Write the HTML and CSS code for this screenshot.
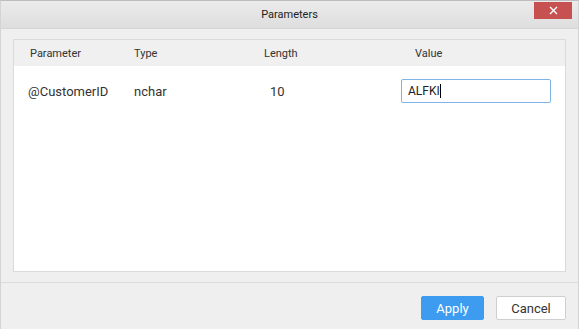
FILE: index.html
```html
<!DOCTYPE html>
<html lang="en">
<head>
    <meta charset="UTF-8">
    <title>Parameters</title>
    <link rel="stylesheet" href="styles.css">
</head>
<body>
    <div class="dialog">
        <div class="title-bar">
            <div class="title">Parameters</div>
            <div class="close-btn">
                <svg width="9" height="9" viewBox="0 0 9 9"><path d="M1 1L8 8M8 1L1 8" stroke="#fff" stroke-width="1.4"/></svg>
            </div>
        </div>
        <div class="content">
            <div class="grid">
                <div class="grid-head">
                    <div class="col col-name">Parameter</div>
                    <div class="col col-type">Type</div>
                    <div class="col col-length">Length</div>
                    <div class="col col-value">Value</div>
                </div>
                <div class="grid-row">
                    <div class="col col-name">@CustomerID</div>
                    <div class="col col-type">nchar</div>
                    <div class="col col-length">10</div>
                    <div class="col col-value">
                        <div class="value-input">ALFKI<span class="caret"></span></div>
                    </div>
                </div>
            </div>
        </div>
        <div class="footer">
            <button class="apply-btn">Apply</button>
            <button class="cancel-btn">Cancel</button>
        </div>
    </div>
</body>
</html>
```

FILE: styles.css
```css
body {
    margin: 0;
    padding: 0;
    font-family: Roboto, "Liberation Sans", sans-serif;
    color: #333;
    background: #fff;
}
.dialog {
    width: 577px;
    height: 328px;
    border: 1px solid #d4d4d4;
    border-top-color: #bdbdbd;
    background: #efefef;
    display: flex;
    flex-direction: column;
}
.title-bar {
    height: 27px;
    border-bottom: 1px solid #d6d6d6;
    background: linear-gradient(#ebebeb, #dedede);
    position: relative;
    display: flex;
    align-items: center;
    justify-content: center;
}
.title {
    font-size: 11px;
    color: #222;
}
.close-btn {
    position: absolute;
    right: 6px;
    top: 1px;
    width: 38px;
    height: 17px;
    background: #c75050;
    display: flex;
    align-items: center;
    justify-content: center;
}
.content {
    padding: 10px 12px 0 12px;
    height: 243px;
    border-bottom: 1px solid #dcdcdc;
}
.grid {
    height: 231px;
    border: 1px solid #dadada;
    background: #fff;
}
.grid-head {
    height: 26px;
    background: #f0f0f0;
    display: flex;
    align-items: center;
    font-size: 11px;
    color: #333;
}
.grid-row {
    height: 50px;
    display: flex;
    align-items: center;
    font-size: 13px;
    color: #333;
}
.col-type { width: 130px; }
.grid-head .col-name { width: 104px; padding-left: 16px; }
.grid-head .col-length { width: 151px; }
.grid-row .col-name { width: 106px; padding-left: 14px; }
.grid-row .col-length { width: 131px; padding-left: 6px; }
.value-input {
    width: 142px;
    height: 22px;
    border: 1px solid #7fb5e6;
    border-radius: 2px;
    padding-left: 6px;
    line-height: 22px;
    font-size: 12px;
    color: #222;
}
.caret {
    display: inline-block;
    width: 1px;
    height: 14px;
    background: #000;
    vertical-align: -3px;
}
.footer {
    flex: 1;
    display: flex;
    justify-content: flex-end;
    align-items: center;
    gap: 12px;
    padding-right: 12px;
    padding-top: 4px;
}
.apply-btn, .cancel-btn {
    font-family: Roboto, "Liberation Sans", sans-serif;
    font-size: 13px;
    height: 24px;
    border-radius: 2px;
    cursor: pointer;
}
.apply-btn {
    width: 63px;
    background: #3d9cf0;
    color: #fff;
    border: 1px solid #3d9cf0;
}
.cancel-btn {
    width: 70px;
    background: #fff;
    color: #333;
    border: 1px solid #cfcfcf;
}
```
